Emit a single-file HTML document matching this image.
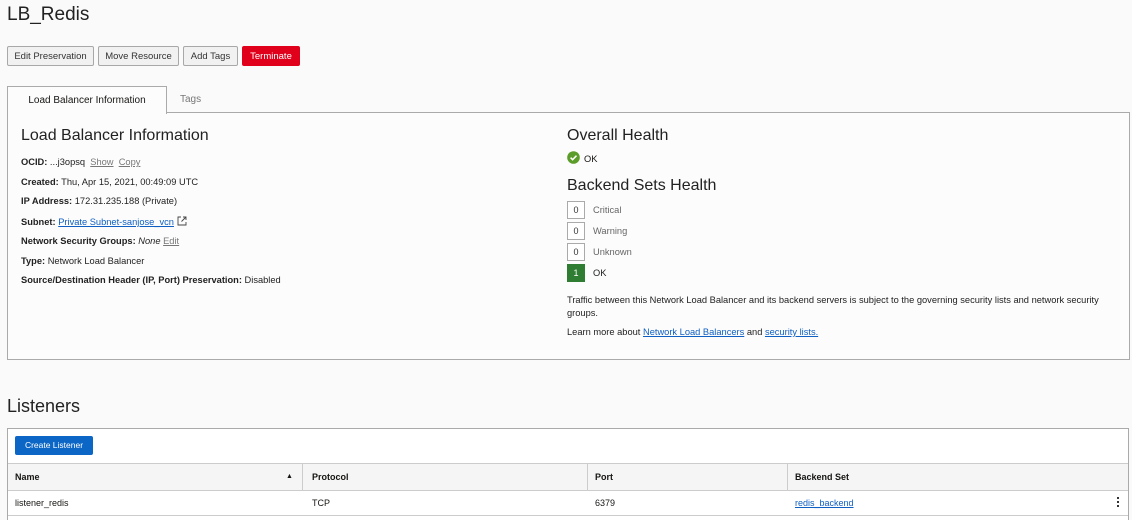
<!DOCTYPE html>
<html><head><style>
html,body{margin:0;width:1132px;height:520px;overflow:hidden}
body{background:#fafafa;font-family:"Liberation Sans",sans-serif;color:#161513;position:relative}
.a{position:absolute;white-space:nowrap}
.btn{position:absolute;top:46px;height:18px;border:1px solid #a8a8a8;background:#f1f1f1;border-radius:2px;font-size:9.5px;line-height:19px;text-align:center;color:#333}
.row{position:absolute;left:21px;font-size:9.3px;color:#222}
.row b{font-weight:bold}
a{color:#0f5fc2;text-decoration:underline}
.g{color:#777;text-decoration:underline}
.box{position:absolute;left:567px;width:16px;height:16px;border:1px solid #aaa;background:#fff;font-size:9px;line-height:16px;text-align:center;color:#333}
.lbl{position:absolute;left:593px;font-size:9.3px;color:#666}
</style></head><body>
<div class="a" style="left:7px;top:4px;font-size:19px;color:#222">LB_Redis</div>
<div class="btn" style="left:7px;width:85px">Edit Preservation</div>
<div class="btn" style="left:98px;width:79px">Move Resource</div>
<div class="btn" style="left:183px;width:53px">Add Tags</div>
<div class="btn" style="left:242px;width:56px;background:#e0001b;border-color:#e0001b;color:#fff">Terminate</div>

<div class="a" style="left:7px;top:112px;width:1121px;height:246px;border:1px solid #aaa;background:#fcfcfc"></div>
<div class="a" style="left:7px;top:86px;width:158px;height:27px;border:1px solid #aaa;border-bottom:none;background:#fcfcfc;font-size:10px;line-height:28px;text-align:center">Load Balancer Information</div>
<div class="a" style="left:180px;top:94px;font-size:10px;color:#777">Tags</div>

<div class="a" style="left:21px;top:127px;font-size:16px;color:#222">Load Balancer Information</div>
<div class="row" style="top:157px"><b>OCID:</b> ...j3opsq &nbsp;<span class="g">Show</span> &nbsp;<span class="g">Copy</span></div>
<div class="row" style="top:177px"><b>Created:</b> Thu, Apr 15, 2021, 00:49:09 UTC</div>
<div class="row" style="top:196px"><b>IP Address:</b> 172.31.235.188 (Private)</div>
<div class="row" style="top:216px"><b>Subnet:</b> <a>Private Subnet-sanjose_vcn</a> <svg width="10" height="10" viewBox="0 0 10 10" style="vertical-align:-1px"><path d="M4 1H1v8h8V6M6 1h3v3M9 1L4.5 5.5" fill="none" stroke="#444" stroke-width="0.9"/></svg></div>
<div class="row" style="top:236px"><b>Network Security Groups:</b> <i>None</i> <span class="g">Edit</span></div>
<div class="row" style="top:256px"><b>Type:</b> Network Load Balancer</div>
<div class="row" style="top:275px"><b>Source/Destination Header (IP, Port) Preservation:</b> Disabled</div>

<div class="a" style="left:567px;top:127px;font-size:16px;color:#222">Overall Health</div>
<svg class="a" style="left:567px;top:151px" width="13" height="13" viewBox="0 0 13 13"><circle cx="6.5" cy="6.5" r="6.3" fill="#5c9c2a"/><path d="M3.6 6.7l2 2 3.9-4" fill="none" stroke="#fff" stroke-width="1.5"/></svg>
<div class="a" style="left:584px;top:154px;font-size:9.3px">OK</div>
<div class="a" style="left:567px;top:177px;font-size:16px;color:#222">Backend Sets Health</div>
<div class="box" style="top:201px">0</div><div class="lbl" style="top:205px">Critical</div>
<div class="box" style="top:222px">0</div><div class="lbl" style="top:226px">Warning</div>
<div class="box" style="top:243px">0</div><div class="lbl" style="top:247px">Unknown</div>
<div class="box" style="top:264px;background:#2e7d32;border-color:#2e7d32;color:#fff">1</div><div class="lbl" style="top:268px;color:#222">OK</div>
<div class="a" style="left:567px;top:294px;font-size:9.3px;line-height:13px;white-space:normal;width:550px;color:#222">Traffic between this Network Load Balancer and its backend servers is subject to the governing security lists and network security groups.</div>
<div class="a" style="left:567px;top:327px;font-size:9.3px;color:#222">Learn more about <a>Network Load Balancers</a> and <a>security lists.</a></div>

<div class="a" style="left:7px;top:396px;font-size:18px;color:#222">Listeners</div>
<div class="a" style="left:7px;top:428px;width:1120px;height:100px;border:1px solid #aaa;border-bottom:none;background:#fff"></div>
<div class="a" style="left:15px;top:436px;width:78px;height:19px;background:#0b66c6;border-radius:2px;color:#fff;font-size:8.5px;line-height:19px;text-align:center">Create Listener</div>
<div class="a" style="left:8px;top:463px;width:1120px;height:26px;background:#f5f5f5;border-top:1px solid #ccc;border-bottom:1px solid #ccc"></div>
<div class="a" style="left:302px;top:464px;width:1px;height:26px;background:#ccc"></div>
<div class="a" style="left:587px;top:464px;width:1px;height:26px;background:#ccc"></div>
<div class="a" style="left:787px;top:464px;width:1px;height:26px;background:#ccc"></div>
<div class="a" style="left:15px;top:472px;font-size:9px;font-weight:bold">Name</div>
<div class="a" style="left:286px;top:473px;font-size:7px">▲</div>
<div class="a" style="left:312px;top:472px;font-size:9px;font-weight:bold">Protocol</div>
<div class="a" style="left:595px;top:472px;font-size:9px;font-weight:bold">Port</div>
<div class="a" style="left:795px;top:472px;font-size:9px;font-weight:bold">Backend Set</div>
<div class="a" style="left:8px;top:515px;width:1120px;height:1px;background:#ccc"></div>
<div class="a" style="left:15px;top:498px;font-size:9px">listener_redis</div>
<div class="a" style="left:312px;top:498px;font-size:9px">TCP</div>
<div class="a" style="left:595px;top:498px;font-size:9px">6379</div>
<div class="a" style="left:795px;top:498px;font-size:9px"><a>redis_backend</a></div>
<div class="a" style="left:1117px;top:497px;width:2px;height:2px;background:#333;box-shadow:0 4px 0 #333,0 8px 0 #333"></div>
</body></html>
